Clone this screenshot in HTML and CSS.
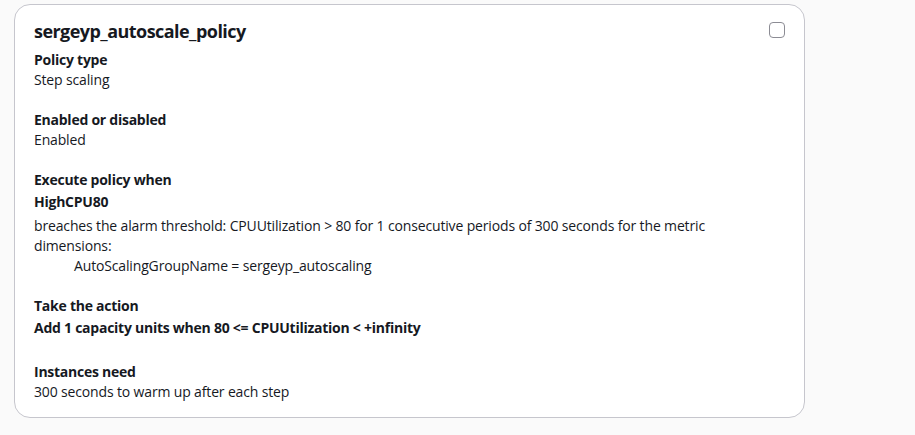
FILE: index.html
```html
<!DOCTYPE html>
<html>
<head>
<meta charset="utf-8">
<link rel="stylesheet" href="styles.css">
</head>
<body>
<div class="card">
  <div class="header">
    <h2 class="title">sergeyp_autoscale_policy</h2>
    <span class="checkbox"></span>
  </div>
  <div class="section first">
    <div class="label">Policy type</div>
    <div class="value">Step scaling</div>
  </div>
  <div class="section">
    <div class="label">Enabled or disabled</div>
    <div class="value">Enabled</div>
  </div>
  <div class="section">
    <div class="label">Execute policy when</div>
    <div class="alarm">HighCPU80</div>
    <div class="desc">breaches the alarm threshold: CPUUtilization &gt; 80 for 1 consecutive periods of 300 seconds for the metric dimensions:</div>
    <div class="dim">AutoScalingGroupName = sergeyp_autoscaling</div>
  </div>
  <div class="section">
    <div class="label">Take the action</div>
    <div class="action">Add 1 capacity units when 80 &lt;= CPUUtilization &lt; +infinity</div>
  </div>
  <div class="section">
    <div class="label">Instances need</div>
    <div class="value">300 seconds to warm up after each step</div>
  </div>
</div>
</body>
</html>
```
FILE: styles.css
```css
html, body {
  margin: 0;
  background: #fafafa;
}
body {
  padding: 4px 14px;
  font-family: "Open Sans", "Noto Sans", sans-serif;
  font-size: 14px;
  line-height: 20px;
  color: #16191f;
  letter-spacing: -0.15px;
}
.card {
  width: 791px;
  box-sizing: border-box;
  background: #fff;
  border: 1px solid #c6c6cd;
  border-radius: 16px;
  padding: 15px 19px 15px 19px;
}
.header {
  display: flex;
  justify-content: space-between;
  align-items: flex-start;
}
.title {
  margin: 0;
  font-size: 18px;
  line-height: 22px;
  font-weight: 700;
  letter-spacing: -0.55px;
}
.checkbox {
  width: 14px;
  height: 14px;
  border: 1px solid #8c8c94;
  border-radius: 4px;
  margin-top: 2px;
}
.section {
  display: flex;
  flex-direction: column;
  margin-top: 20px;
}
.section.first {
  margin-top: 8px;
}
.label,
.alarm,
.action {
  font-weight: 700;
  letter-spacing: -0.25px;
}
.alarm {
  margin-top: 2px;
}
.desc {
  margin-top: 4px;
  max-width: 700px;
}
.dim {
  padding-left: 40px;
}
.action {
  margin-top: 2px;
  margin-bottom: 4px;
}
```
